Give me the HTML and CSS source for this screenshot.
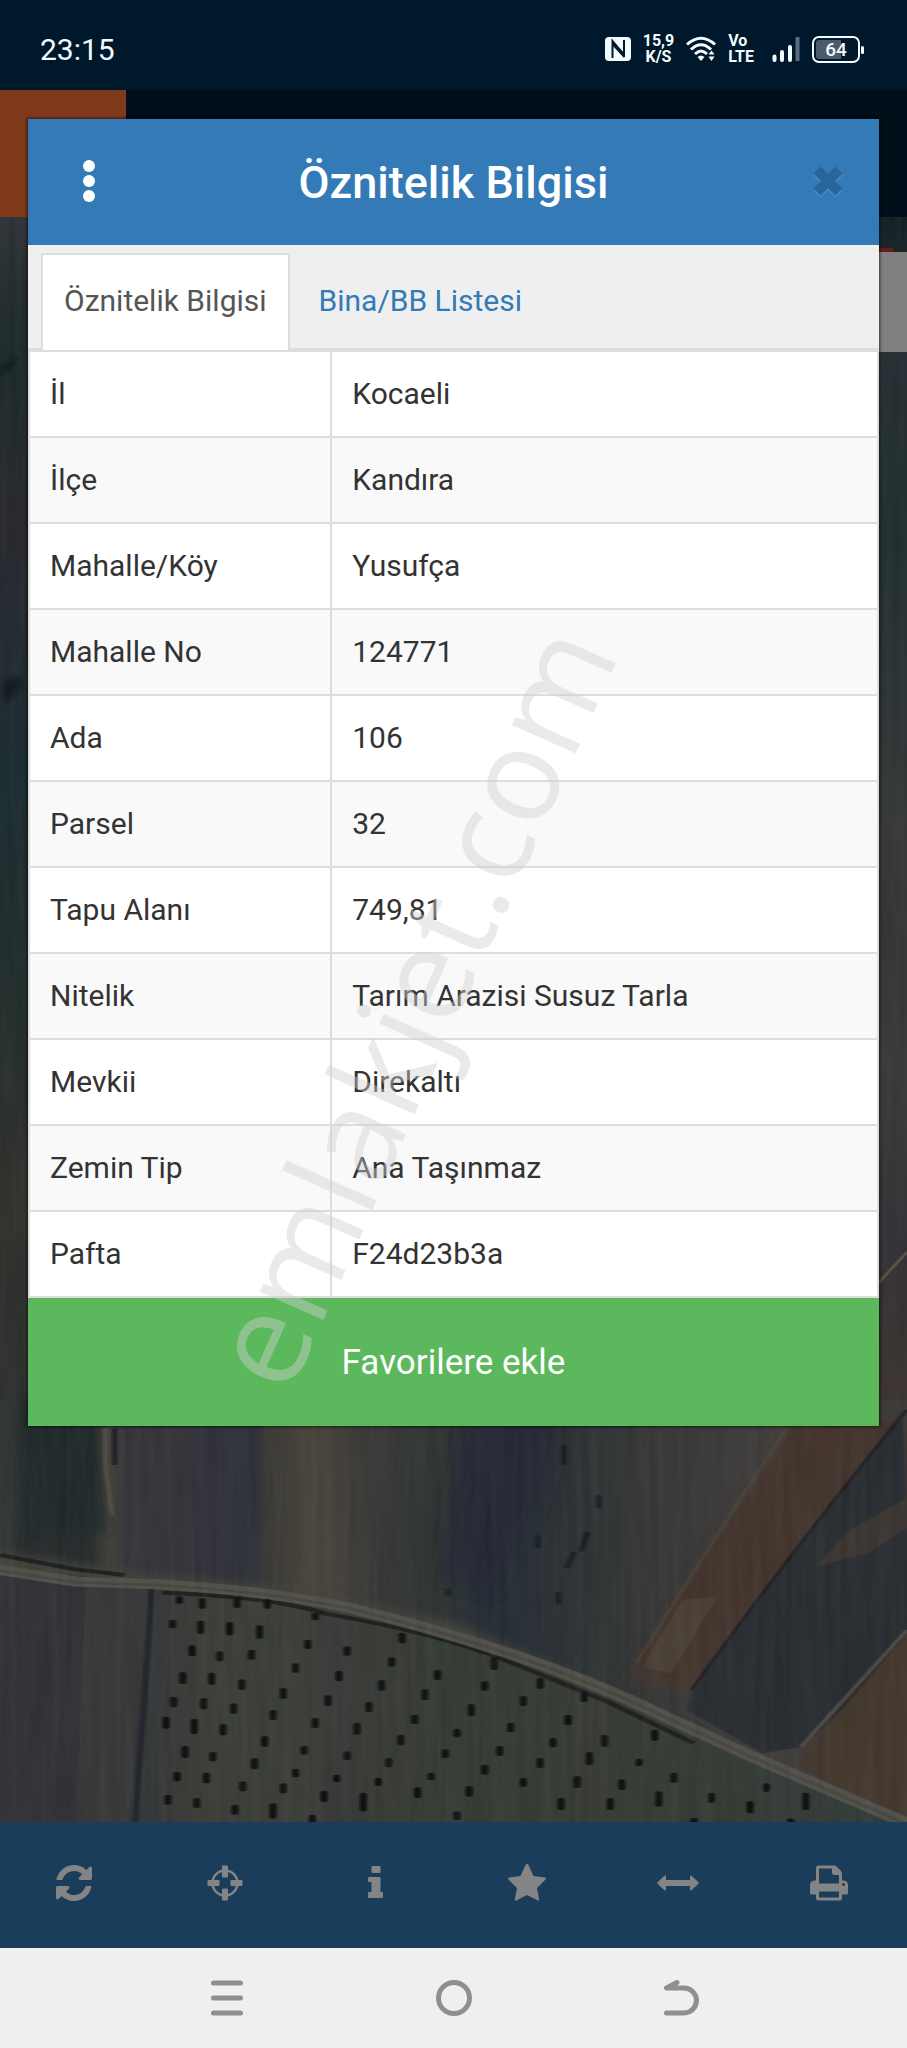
FILE: index.html
```
<!DOCTYPE html>
<html lang="tr">
<head>
    <meta charset="UTF-8">
    <meta name="viewport" content="width=device-width, initial-scale=1.0">
    <title>Öznitelik Bilgisi</title>
    <link rel="stylesheet" href="styles.css">
</head>
<body>
    <div class="screen">
        <header class="status-bar">
            <span class="clock">23:15</span>
            <div class="status-icons">
                <svg class="nfc" width="26" height="24" viewBox="0 0 26 24">
                    <rect width="26" height="24" rx="4" fill="#f4fbff"/>
                    <path d="M7.500 21V4L19 18V3" fill="none" stroke="#00182b" stroke-width="2"/>
                    <path d="M7 3l12 13v5L7 8z" fill="#00182b"/>
                </svg>
                <span class="net-speed">15,9<br>K/S</span>
                <svg class="wifi" width="30" height="26" viewBox="0 0 30 26">
                    <g fill="none" stroke="#f4fbff" stroke-width="3">
                        <path d="M1 8.500Q15-4 29 8.500"/>
                        <path d="M5 13.500Q15 4 25 13.500"/>
                        <path d="M9 18Q15 12 21 18"/>
                    </g>
                    <path d="M11.500 21q3.500-3 7 0L15 25zM22.500 18.500L25.500 14.500l3 4zM22.500 20.500l3 4.500 3-4.500z" fill="#f4fbff"/>
                </svg>
                <span class="volte">Vo<br>LTE</span>
                <svg class="signal" width="28" height="26" viewBox="0 0 28 26">
                    <path d="M2.500 20.500v3.500M10 16v8M18 11v13" stroke="#f4fbff" stroke-width="4" stroke-linecap="round"/>
                    <path d="M25.500 1v24" stroke="#5c6c7b" stroke-width="4"/>
                </svg>
                <span class="battery"><span class="battery-text">64</span></span>
            </div>
        </header>

        <div class="app-header">
            <div class="app-menu"></div>
        </div>

        <main class="map">
            <svg class="map-image" viewBox="0 217 907 1605" preserveAspectRatio="xMidYMax slice">
                <defs>
                    <filter id="soft" x="-10%" y="-10%" width="120%" height="120%"><feGaussianBlur stdDeviation="14"/></filter>
                    <filter id="softEdge"><feGaussianBlur stdDeviation="2"/></filter>
                    <filter id="stripes" x="0" y="0" width="100%" height="100%">
                        <feTurbulence type="fractalNoise" baseFrequency="0.12 0.008" numOctaves="3" seed="4"/>
                        <feColorMatrix type="saturate" values="0.15"/>
                    </filter>
                    <linearGradient id="fields">
                        <stop offset="0" stop-color="#303633"/>
                        <stop offset="0.03" stop-color="#232a2a"/>
                        <stop offset="0.1" stop-color="#242829"/>
                        <stop offset="0.12" stop-color="#403d38"/>
                        <stop offset="0.14" stop-color="#333238"/>
                        <stop offset="0.28" stop-color="#2c2e36"/>
                        <stop offset="0.3" stop-color="#393833"/>
                        <stop offset="0.35" stop-color="#474238"/>
                        <stop offset="0.4" stop-color="#383735"/>
                        <stop offset="0.48" stop-color="#2b312f"/>
                        <stop offset="0.54" stop-color="#222932"/>
                        <stop offset="0.64" stop-color="#2a3031"/>
                        <stop offset="0.72" stop-color="#343434"/>
                        <stop offset="0.85" stop-color="#3d3a39"/>
                        <stop offset="1" stop-color="#393634"/>
                    </linearGradient>
                    <linearGradient id="orchard">
                        <stop offset="0" stop-color="#303335"/>
                        <stop offset="0.1" stop-color="#3a3b35"/>
                        <stop offset="0.4" stop-color="#333833"/>
                        <stop offset="0.6" stop-color="#343832"/>
                        <stop offset="1" stop-color="#2e3735"/>
                    </linearGradient>
                    <linearGradient id="leftEdge" x2="0" y2="1">
                        <stop offset="0" stop-color="#2a2f34"/>
                        <stop offset="0.12" stop-color="#1a2727"/>
                        <stop offset="0.25" stop-color="#25252b"/>
                        <stop offset="0.45" stop-color="#17282d"/>
                        <stop offset="0.65" stop-color="#202b29"/>
                        <stop offset="0.8" stop-color="#2d2d29"/>
                        <stop offset="1" stop-color="#2a2e2c"/>
                    </linearGradient>
                    <linearGradient id="rightEdge" x2="0" y2="1">
                        <stop offset="0" stop-color="#0f1d21"/>
                        <stop offset="0.12" stop-color="#232c30"/>
                        <stop offset="0.25" stop-color="#1e2c2d"/>
                        <stop offset="0.5" stop-color="#313334"/>
                        <stop offset="0.75" stop-color="#363436"/>
                        <stop offset="0.85" stop-color="#312e33"/>
                        <stop offset="1" stop-color="#3a322a"/>
                    </linearGradient>
                </defs>

                <rect y="217" width="450" height="1215" fill="url(#leftEdge)"/>
                <rect x="450" y="217" width="457" height="1215" fill="url(#rightEdge)"/>
                <path d="M0 368l18-12-8 12-10 6zM2 684q10-10 20-6v10L4 704z" fill="#10141c" filter="url(#softEdge)"/>
                <path d="M907 1252L870 1292" stroke="#554d3d" stroke-width="3"/>

                <!-- fields under the dialog -->
                <g transform="translate(0 1400) scale(0.5784 0.3333)">
                    <rect width="1568" height="1290" fill="url(#fields)"/>
                    <g filter="url(#soft)">
                        <path d="M810 0h170l-40 300-90 300-90-60z" fill="#202831"/>
                        <path d="M40 0h110l30 400H70z" fill="#1e2627"/>
                        <path d="M-60 440l290 80 240 40 320 110 500 400-120-60-500-350-330-90-400-60z" fill="#403f39"/>
                        <path d="M1370 60h170L1190 880l-100-40z" fill="#40342d"/>
                    </g>
                    <g filter="url(#softEdge)">
                        <path d="M1380 60h180L1195 870l-95-80z" fill="#3f332c"/>
                        <path d="M1180 600l60-10-80 230-50-20z" fill="#463e33"/>
                        <path d="M1560 30l18 700-190 310-70 20-130-130 10-70z" fill="#282a2e"/>
                        <path d="M1580 280l-110 110-60 110 90-40 80-90z" fill="#37322f"/>
                        <path d="M1578 680v610l-200-200z" fill="#40342c"/>
                        <path d="M1568 690L1385 1040" stroke="#50483e" stroke-width="7"/>
                        <path d="M1568 30Q1400 380 1195 870" fill="none" stroke="#1b1d20" stroke-width="6"/>
                        <path d="M1360 85Q1240 400 1100 790" fill="none" stroke="#4a4036" stroke-width="5"/>
                        <path d="M182 85v110l12 150" fill="none" stroke="#4e4943" stroke-width="8"/>
                        <path d="M198 85v110" stroke="#171a1c" stroke-width="7"/>
                        <path d="M975 140v50M1035 290v30M1015 400l-10 50M992 460l-12 40M775 570v15M930 410v30M965 580v30" stroke="#171d23" stroke-width="10" stroke-linecap="round"/>

                        <path d="M-10 510L130 545 270 555 250 1300H-10z" fill="#2f2e34"/>
                        <path d="M150 545h110l-40 755h-90z" fill="#353436"/>
                        <path d="M265 555L450 580 600 625 840 735 1000 840 1150 950 1300 1075 1540 1270 1568 1300H235z" fill="url(#orchard)"/>
                        <path d="M262 560L250 900 232 1300" fill="none" stroke="#1f2025" stroke-width="10"/>
                        <path d="M0 465L130 508 215 525M280 578Q470 590 560 640 760 700 880 785L1050 905 1200 1030" fill="none" stroke="#1c1f1d" stroke-width="12"/>
                        <path d="M-10 507L130 545 270 553Q450 570 600 622 740 680 880 760T1150 950L1300 1070 1568 1270" fill="none" stroke="#504e46" stroke-width="30"/>
                        <path d="M-10 509L130 547 270 555Q450 572 600 624 740 682 880 762T1150 952L1300 1072 1568 1272" fill="none" stroke="#43443d" stroke-width="8"/>
                    </g>

                    <!-- trees -->
                    <path filter="url(#softEdge)" d="M298 665v14M347 668v28M397 672v28M449 682v28M532 725v16M600 745v16M695 704v20M332 742v20M380 760v18M435 755v18M511 796v16M586 818v20M677 778v16M756 816v18M854 778v26M316 822v24M366 824v24M418 844v20M490 870v20M660 846v20M838 850v16M934 840v20M1010 882v18M300 896v20M352 900v22M404 916v20M472 936v18M567 892v20M638 912v18M735 874v20M815 918v24M905 894v18M287 956v24M336 962v34M386 978v22M458 1014v20M545 960v18M617 974v24M717 950v16M790 992v14M883 974v16M982 950v20M320 1044v24M368 1062v16M440 1080v22M526 1044v14M600 1060v14M693 1010v20M770 1054v14M864 1044v18M956 1020v16M1045 1010v24M1132 996v20M306 1122v16M357 1124v20M420 1150v18M511 1112v14M582 1130v10M672 1080v16M745 1124v10M838 1100v18M934 1080v18M1019 1062v28M1105 1082v10M290 1190v18M340 1200v18M490 1156v18M560 1178v22M654 1140v12M722 1168v20M811 1164v20M905 1140v14M998 1134v24M1075 1144v20M1165 1124v18M406 1220v18M472 1216v34M628 1184v44M970 1200v24M1055 1200v24M1139 1180v34M1230 1184v18M1297 1210v24M1325 1156v14M1393 1184v40M540 1250v30M790 1240v14M1200 1260v20M1367 1262v16M310 595v10M350 600v20M410 598v20M462 604v16M545 645v10" stroke="#070c0e" stroke-width="12" stroke-linecap="round"/>
                </g>

                <rect y="217" width="907" height="1605" filter="url(#stripes)" opacity="0.08"/>
                <path d="M871 248h22v5h-22z" fill="#6b1b17"/>
                <path d="M871 252h36v100h-36z" fill="#808080"/>
            </svg>
        </main>

        <div class="toolbar">
            <button aria-label="Yenile">
                <svg viewBox="0 0 1792 1792"><path d="M1639 1056q0 5-1 7-64 268-268 434.500t-478 166.500q-146 0-282.500-55t-243.500-157l-129 129q-19 19-45 19t-45-19-19-45v-448q0-26 19-45t45-19h448q26 0 45 19t19 45-19 45l-137 137q71 66 161 102t187 36q134 0 250-65t186-179q11-17 53-117 8-23 30-23h192q13 0 22.500 9.500t9.500 22.500zm25-800v448q0 26-19 45t-45 19h-448q-26 0-45-19t-19-45 19-45l138-138q-148-137-349-137-134 0-250 65t-186 179q-11 17-53 117-8 23-30 23h-199q-13 0-22.500-9.500t-9.500-22.500v-7q65-268 270-434.500t480-166.500q146 0 284 55.500t245 156.500l130-129q19-19 45-19t45 19 19 45z"/></svg>
            </button>
            <button aria-label="Konum">
                <svg viewBox="0 0 42 42">
                    <circle cx="21" cy="21" r="12.500" fill="none" stroke="#848484" stroke-width="2.500"/>
                    <rect x="18" y="3.500" width="6" height="12" rx="1"/>
                    <rect x="18" y="26.500" width="6" height="12" rx="1"/>
                    <rect x="3.500" y="18" width="12" height="6" rx="1"/>
                    <rect x="26.500" y="18" width="12" height="6" rx="1"/>
                </svg>
            </button>
            <button aria-label="Bilgi">
                <svg viewBox="0 0 42 42"><path d="M17.500 4h7q1 0 1 1v5q0 1-1 1h-7q-1 0-1-1V5q0-1 1-1zM14 15h10.500q1 0 1 1v14H27q1 0 1 1v4q0 1-1 1H14q-1 0-1-1v-4q0-1 1-1h2.500V20H14q-1 0-1-1v-3q0-1 1-1z"/></svg>
            </button>
            <button aria-label="Favoriler">
                <svg viewBox="0 0 42 42"><path d="M21 2q1 0 1.500 1l5 11 11.500 1.500q1.500.5.5 2L31 26l2.200 11.500q0 1.500-1.500 1L21 33l-10.700 5.500q-1.500.5-1.500-1L11 26l-8.500-8.500q-1-1.500.5-2L14.500 14l5-11q.5-1 1.500-1z"/></svg>
            </button>
            <button aria-label="Ölç">
                <svg viewBox="0 0 42 42"><path d="M.5 21q0-.7.5-1.200l6.500-6q1.500-.8 1.500 1V18h24v-3.200q0-1.800 1.500-1l6.500 6q.5.500.5 1.200t-.5 1.200l-6.500 6q-1.500.8-1.500-1V24H9v3.200q0 1.800-1.500 1l-6.500-6q-.5-.5-.5-1.200z"/></svg>
            </button>
            <button aria-label="Yazdır">
                <svg viewBox="0 0 42 42"><path fill-rule="evenodd" d="M8 6q0-2.500 2.500-2.500H26q1.500 0 2.500 1l4 4q1.500 1.500 1.500 3.500v6.500h1q5 0 5 5V31q0 1.500-1.500 1.500H34V36q0 2.500-2.500 2.500h-21Q8 38.500 8 36v-3.500H3.500Q2 32.500 2 31v-7.500q0-5 5-5h1zM11 6.500v15h20V13h-4.500Q24 13 24 10.500v-4zM11 29.500v6h20v-6zM35.500 21a1.500 1.500 0 1 0 .01 0z"/></svg>
            </button>
        </div>

        <nav class="system-nav">
            <button aria-label="Son uygulamalar">
                <svg viewBox="0 0 40 40"><path d="M6.500 5h27M6.500 20h27M6.500 35h27"/></svg>
            </button>
            <button aria-label="Ana ekran">
                <svg viewBox="0 0 40 40"><circle cx="20" cy="20" r="15.500"/></svg>
            </button>
            <button aria-label="Geri">
                <svg viewBox="0 0 40 40"><path d="M17 4.500L6.500 10H24a12.500 12.500 0 0 1 0 25H6.500"/></svg>
            </button>
        </nav>

        <section class="modal" role="dialog" aria-labelledby="modal-title">
            <div class="modal-header">
                <button class="more" aria-label="Menü">
                    <svg width="12" height="42" viewBox="0 0 12 42"><circle cx="6" cy="6" r="6"/><circle cx="6" cy="21" r="6"/><circle cx="6" cy="36" r="6"/></svg>
                </button>
                <h1 id="modal-title">Öznitelik Bilgisi</h1>
                <button class="close" aria-label="Kapat">
                    <svg width="34" height="34" viewBox="0 0 34 34">
                        <path class="close-shadow" d="M6 8l22 22M28 8L6 30"/>
                        <path d="M6 6l22 22M28 6L6 28"/>
                    </svg>
                </button>
            </div>

            <div class="tabs">
                <a class="tab active" href="#bilgi">Öznitelik Bilgisi</a>
                <a class="tab" href="#liste">Bina/BB Listesi</a>
            </div>

            <table id="bilgi">
                <tbody>
                    <tr><th scope="row">İl</th><td>Kocaeli</td></tr>
                    <tr><th scope="row">İlçe</th><td>Kandıra</td></tr>
                    <tr><th scope="row">Mahalle/Köy</th><td>Yusufça</td></tr>
                    <tr><th scope="row">Mahalle No</th><td>124771</td></tr>
                    <tr><th scope="row">Ada</th><td>106</td></tr>
                    <tr><th scope="row">Parsel</th><td>32</td></tr>
                    <tr><th scope="row">Tapu Alanı</th><td>749,81</td></tr>
                    <tr><th scope="row">Nitelik</th><td>Tarım Arazisi Susuz Tarla</td></tr>
                    <tr><th scope="row">Mevkii</th><td>Direkaltı</td></tr>
                    <tr><th scope="row">Zemin Tip</th><td>Ana Taşınmaz</td></tr>
                    <tr><th scope="row">Pafta</th><td>F24d23b3a</td></tr>
                </tbody>
            </table>

            <button class="favorite">Favorilere ekle</button>

            <svg class="watermark" viewBox="0 0 851 1307">
                <text transform="translate(261 1278) rotate(-66)">emlakjet.com</text>
            </svg>
        </section>
    </div>
</body>
</html>
```
FILE: styles.css
```
* {
    box-sizing: border-box;
}
body {
    margin: 0;
    font-family: Roboto, sans-serif;
    font-size: 30px;
    color: #333;
    background-color: #efefef;
}
button {
    padding: 0;
    border: none;
    background: none;
    font-family: inherit;
    cursor: pointer;
}
.screen {
    position: relative;
    display: flex;
    flex-direction: column;
    min-height: 100vh;
}

/* status bar */
.status-bar {
    display: flex;
    align-items: center;
    justify-content: space-between;
    height: 90px;
    padding: 8px 42px 0 40px;
    background-color: #00182b;
    color: #f4fbff;
}
.status-icons {
    display: flex;
    align-items: center;
}
.net-speed,
.volte {
    font-size: 16px;
    font-weight: 700;
    line-height: 16px;
}
.net-speed {
    margin: 0 12px;
    text-align: center;
}
.volte {
    margin: 0 18px 0 12px;
}
.battery {
    position: relative;
    width: 48px;
    height: 27px;
    margin: 0 5px 0 12px;
    border: 2px solid #f4fbff;
    border-radius: 7px;
    background: linear-gradient(to right, #4b5b6b 62%, transparent 62%) content-box;
    padding: 2px;
}
.battery::after {
    content: "";
    position: absolute;
    top: 8px;
    right: -6px;
    width: 3px;
    height: 8px;
    border-radius: 2px;
    background-color: #f4fbff;
}
.battery-text {
    display: block;
    font-size: 19px;
    font-weight: 500;
    line-height: 20px;
    text-align: center;
}

/* page behind the dialog */
.app-header {
    height: 127px;
    background-color: #000f1a;
}
.app-menu {
    width: 126px;
    height: 100%;
    background-color: #80391b;
}
.map {
    position: relative;
    flex: 1;
    min-height: 1300px;
    background-color: #30322f;
}
.map-image {
    position: absolute;
    width: 100%;
    height: 100%;
}
.toolbar {
    display: grid;
    grid-template-columns: repeat(6, 1fr);
    height: 126px;
    background-color: #1a3d5b;
}
.toolbar button {
    display: flex;
    align-items: center;
    justify-content: center;
    padding: 0 4px 4px 0;
}
.toolbar svg {
    width: 42px;
    height: 42px;
    fill: #848484;
}
.system-nav {
    display: grid;
    grid-template-columns: repeat(3, 1fr);
    height: 100px;
    padding: 0 12.5%;
    background-color: #efefef;
}
.system-nav button {
    display: flex;
    align-items: center;
    justify-content: center;
}
.system-nav svg {
    width: 40px;
    height: 40px;
    fill: none;
    stroke: #8f8f8f;
    stroke-width: 5;
    stroke-linecap: round;
    stroke-linejoin: round;
}

/* dialog */
.modal {
    position: absolute;
    top: 119px;
    left: 28px;
    right: 28px;
    background-color: #fff;
    box-shadow: 0 0 3px 1px rgba(0, 0, 0, 0.6);
}
.modal-header {
    display: grid;
    grid-template-columns: 122px 1fr 102px;
    align-items: center;
    height: 126px;
    background-color: #337ab7;
    color: #fff;
}
.modal-header h1 {
    margin: 0;
    padding-right: 20px;
    font-size: 45px;
    font-weight: 500;
    text-align: center;
}
.more {
    fill: #fff;
}
.close svg {
    fill: none;
    stroke: #27659a;
    stroke-width: 10;
}
.close .close-shadow {
    stroke: #4a8cc4;
}
.tabs {
    display: flex;
    gap: 6px;
    height: 105px;
    padding: 8px 13px 0;
    background-color: #efefef;
    border-bottom: 2px solid #ddd;
}
.tab {
    margin-bottom: -2px;
    padding: 0 21px;
    border: 2px solid transparent;
    border-bottom: none;
    line-height: 92px;
    color: #337ab7;
    text-decoration: none;
}
.tab.active {
    border-color: #ddd;
    background-color: #fff;
    color: #555;
}
table {
    width: 100%;
    table-layout: fixed;
    border-collapse: collapse;
}
th, td {
    padding: 21px 20px;
    border: 2px solid #ddd;
    font-weight: normal;
    line-height: 42px;
    text-align: left;
}
th {
    width: 35.6%;
}
tr:nth-child(even) {
    background-color: #f9f9f9;
}
.favorite {
    display: block;
    width: 100%;
    height: 128px;
    background-color: #5cb85c;
    color: #fff;
    font-size: 35px;
}
.watermark {
    position: absolute;
    top: 0;
    left: 0;
    width: 100%;
    height: 100%;
    pointer-events: none;
}
.watermark text {
    font-family: "Open Sans", sans-serif;
    font-size: 130px;
    fill: rgba(207, 207, 207, 0.44);
}
```
